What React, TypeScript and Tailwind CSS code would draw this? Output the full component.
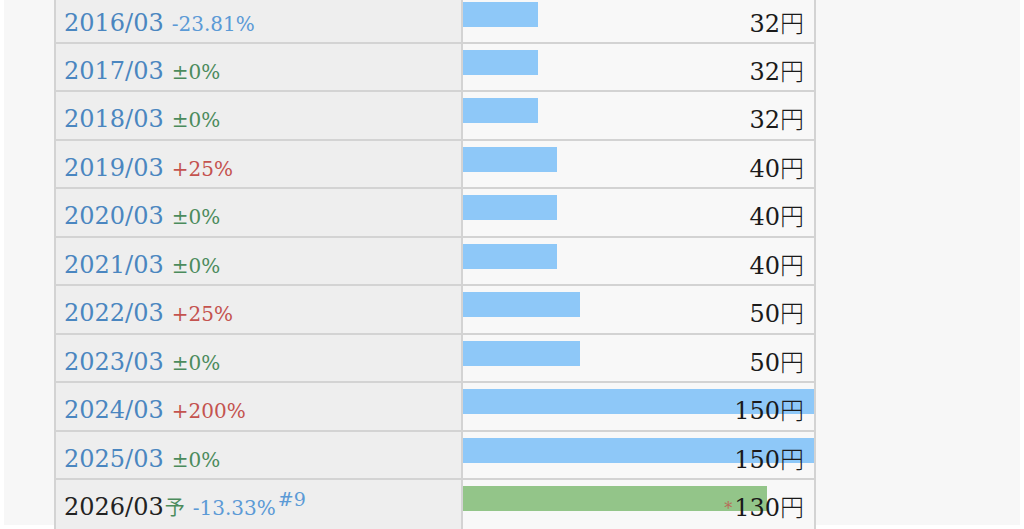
import React from "react";

type Row = {
  period: string;
  change: string;
  tone: "up" | "down" | "flat";
  value: number;
  forecast?: boolean;
};

const rows: Row[] = [
  { period: "2016/03", change: "-23.81%", tone: "down", value: 32 },
  { period: "2017/03", change: "±0%", tone: "flat", value: 32 },
  { period: "2018/03", change: "±0%", tone: "flat", value: 32 },
  { period: "2019/03", change: "+25%", tone: "up", value: 40 },
  { period: "2020/03", change: "±0%", tone: "flat", value: 40 },
  { period: "2021/03", change: "±0%", tone: "flat", value: 40 },
  { period: "2022/03", change: "+25%", tone: "up", value: 50 },
  { period: "2023/03", change: "±0%", tone: "flat", value: 50 },
  { period: "2024/03", change: "+200%", tone: "up", value: 150 },
  { period: "2025/03", change: "±0%", tone: "flat", value: 150 },
  { period: "2026/03", change: "-13.33%", tone: "down", value: 130, forecast: true },
];

const MAX = 150;

const toneClass = {
  up: "text-[#c4534f]",
  down: "text-[#5b9ad6]",
  flat: "text-[#4b8b5c]",
};

function DividendRow({ row }: { row: Row }) {
  const pct = (row.value / MAX) * 100;
  return (
    <div
      className={
        row.forecast
          ? "flex h-[60px]"
          : "flex h-[48.44px] border-b-2 border-[#d3d3d3]"
      }
    >
      <div className="w-[407px] shrink-0 bg-[#eeeeee] border-r-2 border-[#d3d3d3] flex items-baseline pl-2 pt-[9px]">
        <span className={row.forecast ? "text-[24px] text-[#222222]" : "text-[24px] text-[#4a86c0]"}>
          {row.period}
        </span>
        {row.forecast && (
          <span className="text-[20px] text-[#4b8b5c] font-['Noto_Sans_CJK_JP',serif] ml-[1px]">予</span>
        )}
        <span className={`text-[20px] ml-[8px] ${toneClass[row.tone]}`}>{row.change}</span>
        {row.forecast && (
          <span className="text-[19px] text-[#5b9ad6] ml-[2px] relative -top-[9px]">#9</span>
        )}
      </div>
      <div className="relative flex-1 bg-[#f8f8f8] flex items-start justify-end pr-[10px] pt-[8px]">
        <div
          className={`absolute left-0 top-[6px] h-[25px] ${row.forecast ? "bg-[#93c589]" : "bg-[#8ec8f8]"}`}
          style={{ width: `${pct}%` }}
        />
        <span className="relative text-[24px] text-[#1a1a1a]">
          {row.forecast && <span className="text-[16px] text-[#b86c58] mr-[2px] relative -top-[2px]">*</span>}
          {row.value}
          <span className="font-['Noto_Sans_CJK_JP',serif] font-light">円</span>
        </span>
      </div>
    </div>
  );
}

export default function App() {
  return (
    <div className="w-[1024px] h-[529px] overflow-hidden bg-white px-[4px] font-['DejaVu_Serif','Noto_Sans_CJK_JP',serif]">
      <div className="h-full bg-[#f7f7f7] pl-[50px]">
        <div className="w-[762px] -mt-[4.4px] border-l-2 border-r-2 border-[#d3d3d3]">
          {rows.map((r) => (
            <DividendRow key={r.period} row={r} />
          ))}
        </div>
      </div>
    </div>
  );
}
